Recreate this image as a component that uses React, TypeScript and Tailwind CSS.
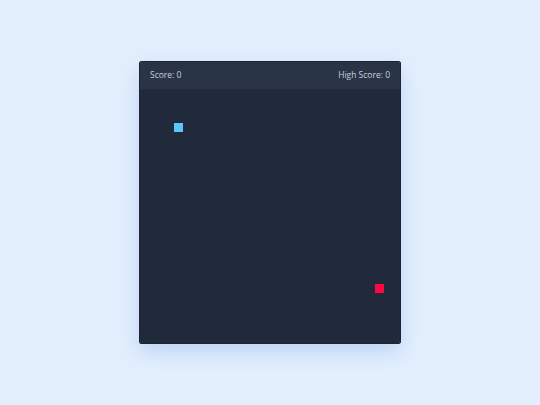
import React from "react";

type Cell = { x: number; y: number };

const snake: Cell[] = [{ x: 34, y: 34 }];
const food: Cell = { x: 235, y: 195 };

function Board() {
  return (
    <div className="relative h-[254px] bg-[#212a3a]">
      {snake.map((s, i) => (
        <div
          key={i}
          className="absolute w-[9px] h-[9px] bg-[#5cc6fb]"
          style={{ left: s.x, top: s.y }}
        />
      ))}
      <div
        className="absolute w-[9px] h-[9px] bg-[#fe0843]"
        style={{ left: food.x, top: food.y }}
      />
    </div>
  );
}

export default function App() {
  return (
    <div
      className="flex items-center justify-center w-[540px] h-[405px] bg-[#e3effd]"
      style={{ fontFamily: '"Open Sans", "Noto Sans", sans-serif' }}
    >
      <div className="w-[262px] rounded-[2px] overflow-hidden border border-[#1d2533] shadow-[0_8px_20px_rgba(120,160,230,0.35)]">
        <div className="flex items-center justify-between h-[27px] px-[10px] bg-[#293447] text-[8.5px] text-[#c9d1dc]">
          <span>Score: 0</span>
          <span>High Score: 0</span>
        </div>
        <Board />
      </div>
    </div>
  );
}
